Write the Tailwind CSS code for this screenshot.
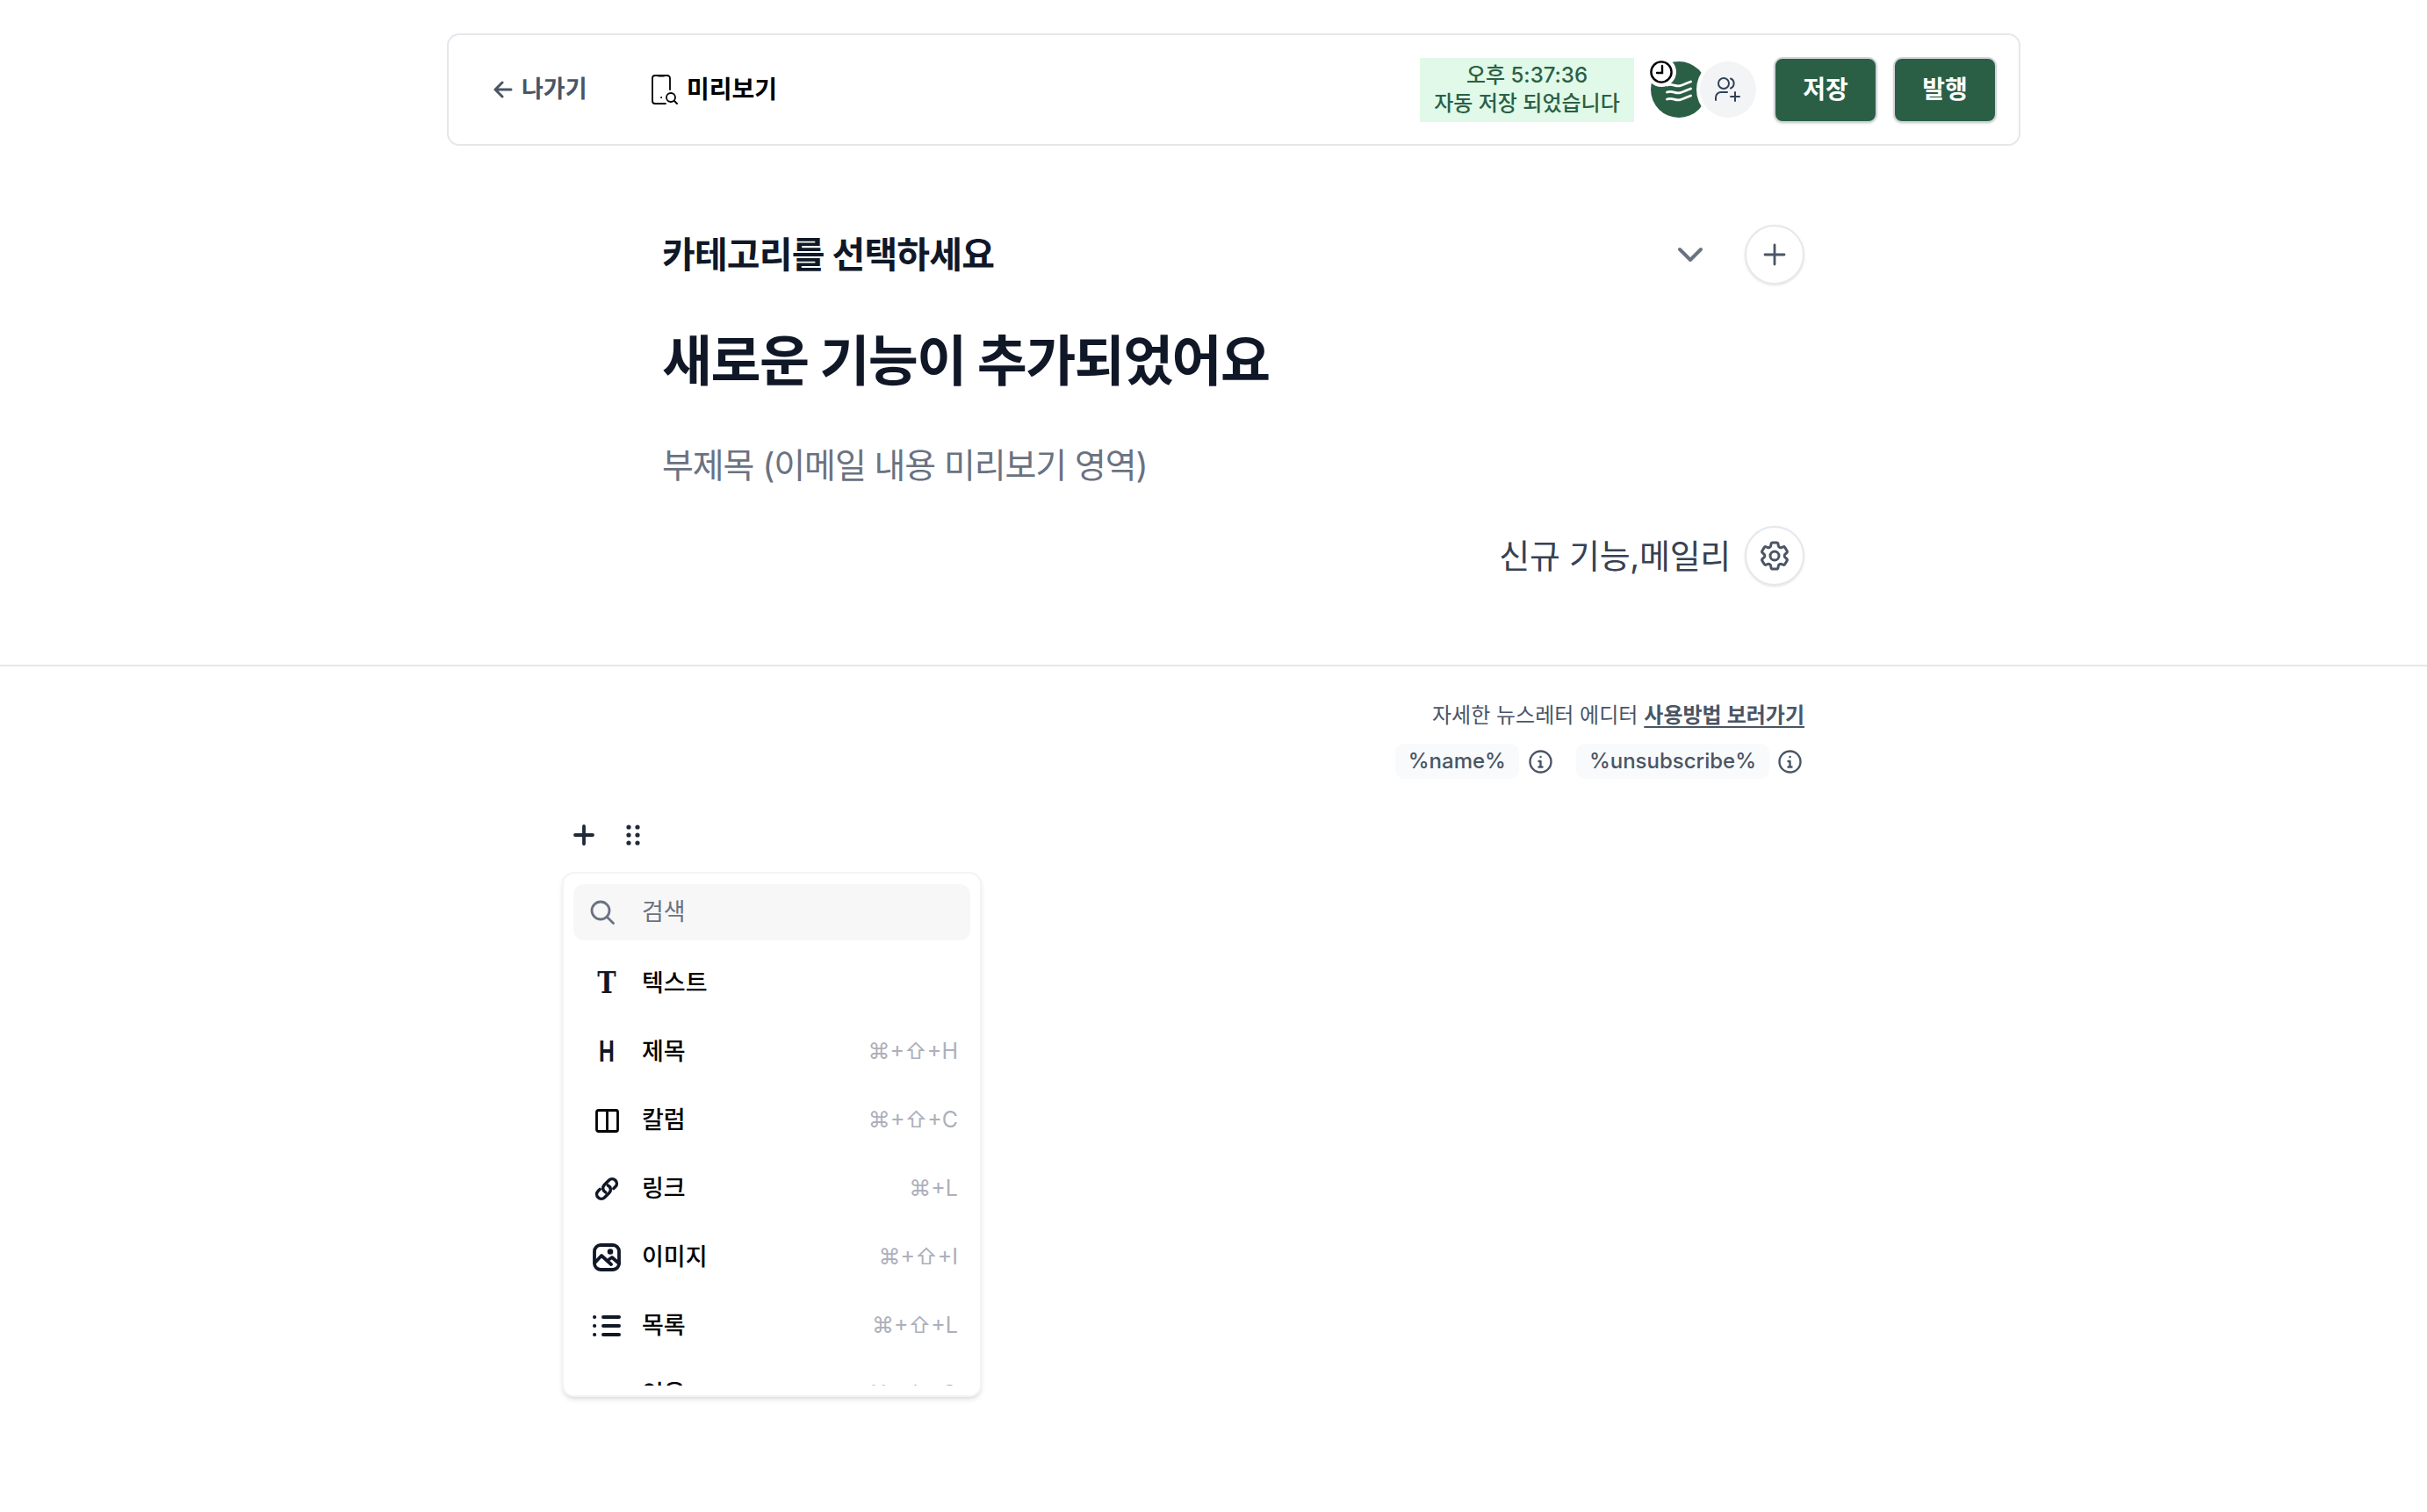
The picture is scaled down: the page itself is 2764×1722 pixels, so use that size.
<!DOCTYPE html>
<html lang="ko">
  <head>
    <meta charset="UTF-8" />
    <title>뉴스레터 에디터</title>
    <script src="https://cdn.jsdelivr.net/npm/@tailwindcss/browser@4"></script>
  </head>
  <body class="bg-white h-[1722px] overflow-hidden font-['Inter','Noto_Sans_CJK_KR',sans-serif] text-gray-900">
    <!-- top bar -->
    <header class="ml-[509px] mt-[38px] w-[1792px] h-[128px] border-2 border-gray-200 rounded-[14px] flex items-center pl-[51px] pr-[25px]">
      <a class="flex items-center gap-[10px] text-[27px] font-semibold text-gray-600 w-[180px]">
        <svg class="w-[22px] h-[22px]" viewBox="0 0 22 22" fill="none" stroke="currentColor" stroke-width="3" stroke-linecap="round" stroke-linejoin="round"><path d="M20 11H2M10 3l-8 8 8 8"/></svg>
        나가기
      </a>
      <a class="flex items-center gap-[10px] text-[28px] font-semibold text-black">
        <svg class="w-[30px] h-[34px]" viewBox="0 0 30 34" fill="none" stroke="currentColor" stroke-width="1.8" stroke-linecap="round" stroke-linejoin="round"><path d="M21 17V4a3 3 0 0 0-3-3H4a3 3 0 0 0-3 3v26a3 3 0 0 0 3 3h12M8 1.500h6M11 26h.2"/><circle cx="22" cy="26" r="5"/><path d="M26 30l3 3"/></svg>
        미리보기
      </a>
      <div class="ml-auto w-[244px] h-[73px] bg-[#e0f9e8] text-[#2b5f45] text-[24px] font-medium leading-[32px] text-center flex flex-col justify-center">
        <span>오후 5:37:36</span>
        <span>자동 저장 되었습니다</span>
      </div>
      <div class="relative flex ml-[19px] mr-[20px]">
        <div class="w-[64px] h-[64px] rounded-full bg-[#2b5f45]">
          <svg class="w-[30px] h-[26px] ml-[17px] mt-[21px]" viewBox="0 0 30 26" fill="none" stroke="white" stroke-width="2.800" stroke-linecap="round"><path d="M1.500 6c6-2.500 9 2 15 .7 4-.9 7-3 12-4.700M1.500 14c6-2.500 9 2 15 .7 4-.9 7-3 12-4.700M1.500 22c6-2.500 9 2 15 .7 4-.9 7-3 12-4.700"/></svg>
        </div>
        <div class="-ml-[8px] w-[64px] h-[64px] rounded-full bg-gray-100 ring-[4px] ring-white flex items-center justify-center">
          <svg class="w-[30px] h-[30px] text-slate-700" viewBox="0 0 30 30" fill="none" stroke="currentColor" stroke-width="2" stroke-linecap="round"><circle cx="10" cy="8" r="6"/><path d="M18 2.500a6 6 0 0 1 0 11M1 27v-3a6 6 0 0 1 6-6h7M23 18v10M18 23h10"/></svg>
        </div>
        <div class="absolute -left-[5px] -top-[5px] w-[34px] h-[34px] rounded-full bg-white flex items-center justify-center">
          <svg class="w-[26px] h-[26px]" viewBox="0 0 26 26" fill="none" stroke="black" stroke-width="2.400" stroke-linecap="round"><circle cx="13" cy="13" r="11.600"/><path d="M14 6v8H8"/></svg>
        </div>
      </div>
      <button class="w-[118px] h-[75px] rounded-[10px] bg-[#2b5f45] border-2 border-gray-300 shadow-sm text-white text-[28px] font-semibold">저장</button>
      <button class="ml-[18px] w-[118px] h-[75px] rounded-[10px] bg-[#2b5f45] border-2 border-gray-300 shadow-sm text-white text-[28px] font-semibold">발행</button>
    </header>

    <!-- title block -->
    <section class="ml-[754px] w-[1301px]">
      <div class="mt-[90px] h-[68px] flex items-center">
        <span class="mt-[2px] text-[41px] font-bold tracking-[-0.8px] text-gray-900">카테고리를 선택하세요</span>
        <svg class="ml-auto mr-[47px] w-[30px] h-[18px] text-gray-500" viewBox="0 0 30 18" fill="none" stroke="currentColor" stroke-width="4" stroke-linecap="round" stroke-linejoin="round"><path d="M3 3l12 12L27 3"/></svg>
        <button class="w-[68px] h-[68px] rounded-full border-2 border-gray-200 shadow-sm flex items-center justify-center">
          <svg class="w-[26px] h-[26px] text-gray-600" viewBox="0 0 26 26" fill="none" stroke="currentColor" stroke-width="2.800" stroke-linecap="round"><path d="M13 2v22M2 13h22"/></svg>
        </button>
      </div>
      <h1 class="mt-[47px] h-[80px] flex items-center text-[62px] font-bold tracking-[-1.6px] text-gray-900">새로운 기능이 추가되었어요</h1>
      <p class="mt-[49px] h-[60px] flex items-center text-[39px] tracking-[-1.1px] text-gray-500">부제목 (이메일 내용 미리보기 영역)</p>
      <div class="mt-[39px] h-[68px] flex items-center justify-end gap-[16px]">
        <span class="text-[38px] tracking-[-0.3px] text-gray-700">신규 기능,메일리</span>
        <button class="w-[68px] h-[68px] rounded-full border-2 border-gray-200 shadow-sm flex items-center justify-center">
          <svg class="w-[40px] h-[40px] text-gray-600" viewBox="0 0 24 24" fill="none" stroke="currentColor" stroke-width="1.800" stroke-linecap="round" stroke-linejoin="round"><path d="M9.594 3.940c.09-.542.56-.94 1.110-.94h2.593c.55 0 1.020.398 1.110.94l.213 1.281c.063.374.313.686.645.87.074.04.147.083.22.127.325.196.72.257 1.075.124l1.217-.456a1.125 1.125 0 0 1 1.370.49l1.296 2.247a1.125 1.125 0 0 1-.26 1.431l-1.003.827c-.293.241-.438.613-.43.992a7.723 7.723 0 0 1 0 .255c-.008.378.137.75.43.991l1.004.827c.424.35.534.955.26 1.430l-1.298 2.247a1.125 1.125 0 0 1-1.369.491l-1.217-.456c-.355-.133-.75-.072-1.076.124a6.470 6.470 0 0 1-.22.128c-.331.183-.581.495-.644.869l-.213 1.281c-.09.543-.56.94-1.110.94h-2.594c-.55 0-1.019-.398-1.110-.94l-.213-1.281c-.062-.374-.312-.686-.644-.87a6.520 6.520 0 0 1-.22-.127c-.325-.196-.72-.257-1.076-.124l-1.217.456a1.125 1.125 0 0 1-1.369-.49l-1.297-2.247a1.125 1.125 0 0 1 .26-1.431l1.004-.827c.292-.24.437-.613.43-.991a6.932 6.932 0 0 1 0-.255c.007-.38-.138-.751-.43-.992l-1.004-.827a1.125 1.125 0 0 1-.26-1.430l1.297-2.247a1.125 1.125 0 0 1 1.370-.491l1.216.456c.356.133.751.072 1.076-.124.072-.044.146-.086.22-.128.332-.183.582-.495.644-.869l.214-1.280Z"/><circle cx="12" cy="12" r="3"/></svg>
        </button>
      </div>
    </section>

    <hr class="mt-[90px] border-t-2 border-gray-200" />

    <!-- editor -->
    <section class="ml-[640px] w-[1415px]">
      <div class="mt-[36px] h-[40px] flex items-center justify-end gap-[7px] text-[24px] text-gray-600">
        <span>자세한 뉴스레터 에디터</span>
        <a class="font-semibold underline underline-offset-4">사용방법 보러가기</a>
      </div>
      <div class="mt-[12px] h-[40px] flex items-center justify-end text-[24px] font-medium text-gray-600">
        <span class="h-[40px] px-[15px] rounded-[10px] bg-gray-50 flex items-center">%name%</span>
        <svg class="ml-[11px] w-[27px] h-[27px]" viewBox="0 0 27 27" fill="none" stroke="currentColor" stroke-width="2.400" stroke-linecap="round"><circle cx="13.500" cy="13.500" r="12"/><path d="M13.500 13v6M11.500 13h2M11.500 19.500h4M13.500 8h.1"/></svg>
        <span class="ml-[27px] h-[40px] px-[15px] rounded-[10px] bg-gray-50 flex items-center">%unsubscribe%</span>
        <svg class="ml-[10px] mr-[3px] w-[27px] h-[27px]" viewBox="0 0 27 27" fill="none" stroke="currentColor" stroke-width="2.400" stroke-linecap="round"><circle cx="13.500" cy="13.500" r="12"/><path d="M13.500 13v6M11.500 13h2M11.500 19.500h4M13.500 8h.1"/></svg>
      </div>

      <div class="mt-[52px] h-[24px] pl-[13px] flex items-center gap-[36px] text-gray-800">
        <svg class="w-[24px] h-[24px]" viewBox="0 0 24 24" fill="none" stroke="currentColor" stroke-width="3.800" stroke-linecap="round"><path d="M12 2v20M2 12h20"/></svg>
        <svg class="w-[16px] h-[24px]" viewBox="0 0 16 24" fill="currentColor"><circle cx="3" cy="3" r="2.600"/><circle cx="13" cy="3" r="2.600"/><circle cx="3" cy="12" r="2.600"/><circle cx="13" cy="12" r="2.600"/><circle cx="3" cy="21" r="2.600"/><circle cx="13" cy="21" r="2.600"/></svg>
      </div>

      <!-- block menu -->
      <div class="mt-[30px] w-[478px] h-[598px] rounded-[14px] border-2 border-gray-100 bg-white shadow-md px-[11px] pt-[12px] pb-[13px]">
        <div class="h-[64px] rounded-[12px] bg-[#f7f7f7] flex items-center pl-[19px] text-[27px] text-gray-500">
          <svg class="w-[28px] h-[28px]" viewBox="0 0 28 28" fill="none" stroke="currentColor" stroke-width="2.800" stroke-linecap="round"><circle cx="12" cy="12" r="10"/><path d="M19.500 19.500l7 7"/></svg>
          <span class="ml-[31px]">검색</span>
        </div>
        <ul class="mt-[10px] h-[497px] overflow-hidden text-[27px] font-medium text-black">
          <li class="h-[78px] flex items-center pr-[14px]">
            <span class="w-[76px] mr-[2px] text-center font-['DejaVu_Serif'] text-[33px] font-bold text-gray-900 scale-x-[.87]">T</span>
            <span>텍스트</span>
          </li>
          <li class="h-[78px] flex items-center pr-[14px]">
            <span class="w-[76px] mr-[2px] text-center font-['Inter'] text-[33px] font-bold text-gray-900 scale-x-[.72]">H</span>
            <span>제목</span>
            <span class="ml-auto text-[25px] font-normal text-[#adb0bc]">⌘+⇧+H</span>
          </li>
          <li class="h-[78px] flex items-center pr-[14px]">
            <span class="w-[76px] mr-[2px] flex justify-center">
              <svg class="w-[27px] h-[27px]" viewBox="0 0 27 27" fill="none" stroke="black" stroke-width="2.800" stroke-linejoin="round"><rect x="1.500" y="1.500" width="24" height="24" rx="2"/><path d="M13.500 1.500v24"/></svg>
            </span>
            <span>칼럼</span>
            <span class="ml-auto text-[25px] font-normal text-[#adb0bc]">⌘+⇧+C</span>
          </li>
          <li class="h-[78px] flex items-center pr-[14px]">
            <span class="w-[76px] mr-[2px] flex justify-center">
              <svg class="w-[28px] h-[28px]" viewBox="0 0 24 24" fill="none" stroke="#111827" stroke-width="3" stroke-linecap="round" stroke-linejoin="round"><path d="M13.190 8.688a4.500 4.500 0 0 1 1.242 7.244l-4.500 4.500a4.500 4.500 0 0 1-6.364-6.364l1.757-1.757m13.350-.622 1.757-1.757a4.500 4.500 0 0 0-6.364-6.364l-4.500 4.500a4.500 4.500 0 0 0 1.242 7.244"/></svg>
            </span>
            <span>링크</span>
            <span class="ml-auto text-[25px] font-normal text-[#adb0bc]">⌘+L</span>
          </li>
          <li class="h-[78px] flex items-center pr-[14px]">
            <span class="w-[76px] mr-[2px] flex justify-center">
              <svg class="w-[32px] h-[32px]" viewBox="0 0 32 32" fill="none" stroke="#111827" stroke-width="3.800" stroke-linecap="round" stroke-linejoin="round"><rect x="2" y="2" width="28" height="28" rx="7"/><path d="M2.500 22l7.500-8 11 10M19 18l3-2 8 7"/><circle cx="20" cy="9.500" r="1.400" fill="#111827"/></svg>
            </span>
            <span>이미지</span>
            <span class="ml-auto text-[25px] font-normal text-[#adb0bc]">⌘+⇧+I</span>
          </li>
          <li class="h-[78px] flex items-center pr-[14px]">
            <span class="w-[76px] mr-[2px] flex justify-center">
              <svg class="w-[32px] h-[24px]" viewBox="0 0 32 24" fill="none" stroke="#111827" stroke-width="4" stroke-linecap="round"><path d="M12 2h18M12 12h18M12 22h18M2 2h.2M2 12h.2M2 22h.2"/></svg>
            </span>
            <span>목록</span>
            <span class="ml-auto text-[25px] font-normal text-[#adb0bc]">⌘+⇧+L</span>
          </li>
          <li class="h-[78px] flex items-center pr-[14px]">
            <span class="w-[76px] mr-[2px]"></span>
            <span>인용</span>
            <span class="ml-auto text-[25px] font-normal text-[#adb0bc]">⌘+⇧+Q</span>
          </li>
        </ul>
      </div>
    </section>
  </body>
</html>
